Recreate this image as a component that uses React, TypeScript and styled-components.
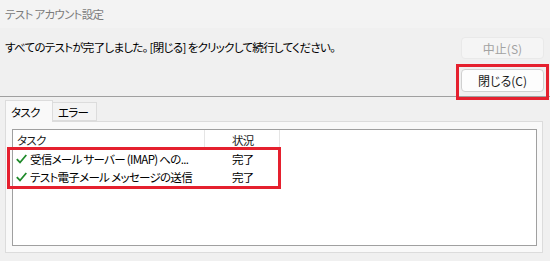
import React from "react";
import styled, { createGlobalStyle } from "styled-components";

const GlobalStyle = createGlobalStyle`
  html, body { margin: 0; padding: 0; background: #f0f0f0; }
  body {
    font-family: "Noto Sans CJK JP", "Noto Sans", sans-serif;
    font-size: 11.5px;
    letter-spacing: -0.7px;
    font-feature-settings: "palt";
    color: #000;
  }
`;

const Window = styled.div`
  width: 550px;
  height: 261px;
  display: flex;
  flex-direction: column;
  background: #f0f0f0;
  overflow: hidden;
`;

const TitleBar = styled.div`
  height: 28px;
  padding-left: 5px;
  display: flex;
  align-items: center;
  color: #7c7c7c;
  background: #f3f3f3;
  line-height: 16px;
`;

const Top = styled.div`
  height: 68px;
  display: flex;
  justify-content: space-between;
  padding: 0 6px 0 5px;
`;

const Message = styled.div`
  margin-top: 11px;
  line-height: 16px;
`;

const ButtonCol = styled.div`
  display: flex;
  flex-direction: column;
  gap: 10px;
  padding-top: 9px;
`;

const Button = styled.button<{ $disabled?: boolean; $h: number }>`
  position: relative;
  width: 83px;
  height: ${(p) => p.$h}px;
  box-sizing: border-box;
  border-radius: 4px;
  font-family: inherit;
  font-size: 12px;
  letter-spacing: 0;
  font-feature-settings: "palt";
  padding: 0;
  border: 1px solid ${(p) => (p.$disabled ? "#e9e9e9" : "#d0d0d0")};
  background: ${(p) => (p.$disabled ? "#f5f5f5" : "#fdfdfd")};
  color: ${(p) => (p.$disabled ? "#a2a2a2" : "#1a1a1a")};
`;

const Highlight = styled.div<{ $l: number; $t: number; $w: number; $h: number }>`
  position: absolute;
  left: ${(p) => p.$l}px;
  top: ${(p) => p.$t}px;
  width: ${(p) => p.$w}px;
  height: ${(p) => p.$h}px;
  box-sizing: border-box;
  border: 3px solid #e5202e;
  pointer-events: none;
  z-index: 5;
`;

const Divider = styled.div`
  height: 1px;
  background: #a0a0a0;
`;

const TabStrip = styled.div`
  height: 24px;
  display: flex;
  align-items: flex-end;
  padding-left: 5px;
  position: relative;
  z-index: 2;
`;

const Tab = styled.div<{ $active?: boolean }>`
  box-sizing: border-box;
  height: ${(p) => (p.$active ? 22 : 19)}px;
  margin-bottom: ${(p) => (p.$active ? -1 : 0)}px;
  padding-left: 5px;
  width: ${(p) => (p.$active ? 48 : 44)}px;
  white-space: nowrap;
  display: flex;
  align-items: center;
  background: ${(p) => (p.$active ? "#f9f9f9" : "#f3f3f3")};
  border: 1px solid #dcdcdc;
  border-bottom: ${(p) => (p.$active ? "none" : "1px solid #dcdcdc")};
  border-left: ${(p) => (p.$active ? "1px solid #dcdcdc" : "none")};
`;

const Panel = styled.div`
  box-sizing: border-box;
  margin-left: 5px;
  width: 538px;
  height: 132px;
  background: #f9f9f9;
  border: 1px solid #dcdcdc;
  padding: 7px 5px 6px 6px;
  display: flex;
`;

const ListView = styled.div`
  flex: 1;
  background: #fff;
  border: 1px solid #a0a0a0;
  display: flex;
  flex-direction: column;
`;

const HeaderRow = styled.div`
  height: 20px;
  display: flex;
`;

const HeaderCell = styled.div<{ $w: number; $pl: number }>`
  box-sizing: border-box;
  width: ${(p) => p.$w}px;
  padding-left: ${(p) => p.$pl}px;
  border-right: 1px solid #e5e5e5;
  display: flex;
  align-items: center;
  color: #1a1a1a;
`;

const Rows = styled.div`
  position: relative;
`;

const Row = styled.div`
  height: 18px;
  display: flex;
  align-items: center;
`;

const Cell = styled.div<{ $w: number; $pl: number }>`
  box-sizing: border-box;
  width: ${(p) => p.$w}px;
  padding-left: ${(p) => p.$pl}px;
  display: flex;
  align-items: center;
  gap: 3px;
  white-space: nowrap;
`;

const CheckIcon = styled.svg`
  flex-shrink: 0;
  display: block;
`;

const Check = () => (
  <CheckIcon width="11" height="10" viewBox="0 0 11 10">
    <path d="M0.8 5.2 L4 8.5 L10.3 1" fill="none" stroke="#1f8a2a" strokeWidth="1.8" />
  </CheckIcon>
);

const rows = [
  { task: "受信メール サーバー (IMAP) への...", status: "完了" },
  { task: "テスト電子メール メッセージの送信", status: "完了" },
];

export default function App() {
  return (
    <>
      <GlobalStyle />
      <Window>
        <TitleBar>テスト アカウント設定</TitleBar>
        <Top>
          <Message>すべてのテストが完了しました。 [閉じる] をクリックして続行してください。</Message>
          <ButtonCol>
            <Button $disabled $h={22} disabled>
              中止(S)
            </Button>
            <Button $h={23}>
              閉じる(C)
              <Highlight $l={-6} $t={-6} $w={93} $h={36} />
            </Button>
          </ButtonCol>
        </Top>
        <Divider />
        <TabStrip>
          <Tab $active>タスク</Tab>
          <Tab>エラー</Tab>
        </TabStrip>
        <Panel>
          <ListView>
            <HeaderRow>
              <HeaderCell $w={192} $pl={4}>タスク</HeaderCell>
              <HeaderCell $w={75} $pl={27}>状況</HeaderCell>
            </HeaderRow>
            <Rows>
              {rows.map((r) => (
                <Row key={r.task}>
                  <Cell $w={192} $pl={3}>
                    <Check />
                    {r.task}
                  </Cell>
                  <Cell $w={75} $pl={27}>{r.status}</Cell>
                </Row>
              ))}
              <Highlight $l={-6} $t={-3} $w={274} $h={42} />
            </Rows>
          </ListView>
        </Panel>
      </Window>
    </>
  );
}
